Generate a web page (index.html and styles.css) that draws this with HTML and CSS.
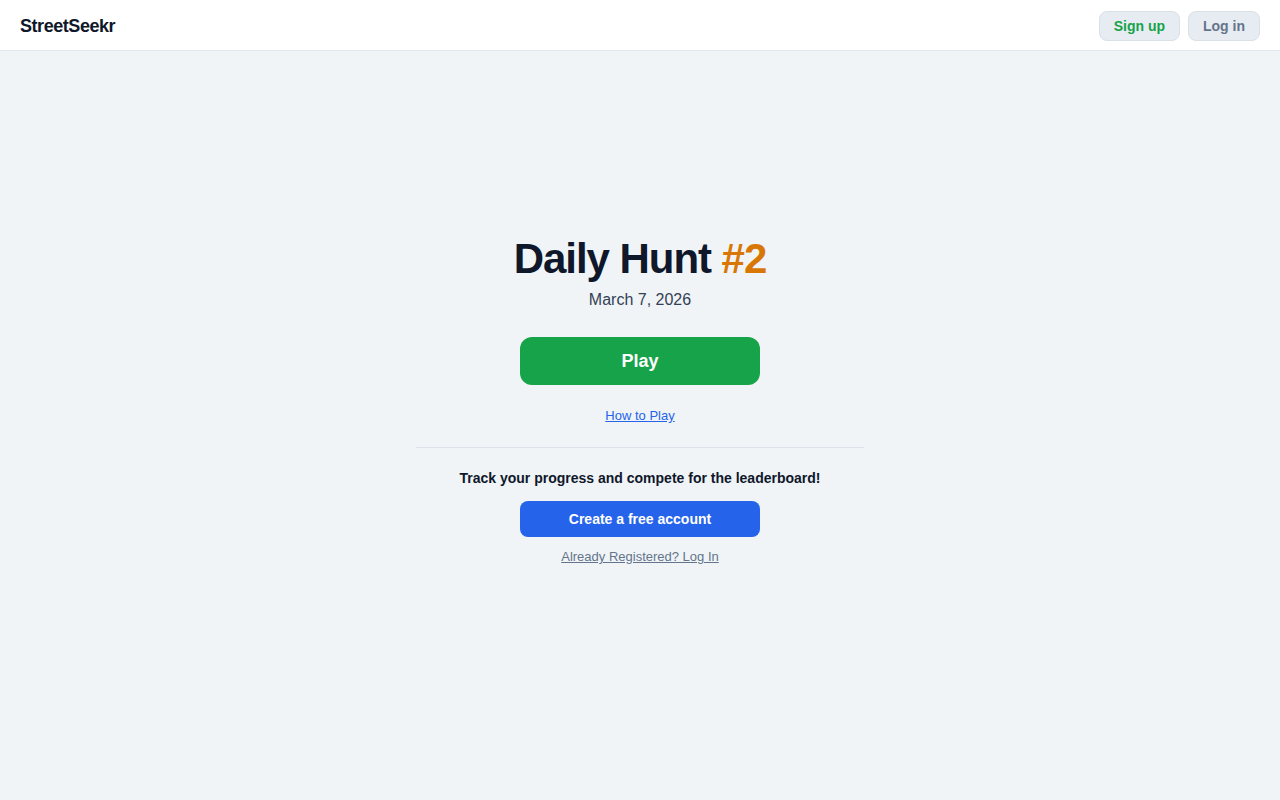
FILE: index.html
```html
<!DOCTYPE html>
<html lang="en">
<head>
<meta charset="utf-8">
<title>StreetSeekr</title>
<link rel="stylesheet" href="styles.css">
</head>
<body>
<header class="topbar">
  <a class="logo" href="#">StreetSeekr</a>
  <nav class="auth">
    <a class="btn-sm signup" href="#">Sign up</a>
    <a class="btn-sm login" href="#">Log in</a>
  </nav>
</header>
<main class="main">
  <section class="hero">
    <h1 class="title">Daily Hunt <span class="num">#2</span></h1>
    <p class="date">March 7, 2026</p>
    <a class="play" href="#">Play</a>
    <a class="howto" href="#">How to Play</a>
    <hr class="divider">
    <p class="track">Track your progress and compete for the leaderboard!</p>
    <a class="create" href="#">Create a free account</a>
    <a class="already" href="#">Already Registered? Log In</a>
  </section>
</main>
</body>
</html>
```
FILE: styles.css
```css
* { box-sizing: border-box; }
html, body { margin: 0; padding: 0; }
body {
  font-family: "Liberation Sans", Arial, sans-serif;
  background: #f0f4f7;
  color: #0f172a;
  min-height: 800px;
}
.topbar {
  height: 51px;
  background: #ffffff;
  border-bottom: 1px solid #e2e8f0;
  display: flex;
  align-items: center;
  justify-content: space-between;
  padding: 2px 20px 0;
}
.logo {
  font-size: 18px;
  font-weight: 700;
  letter-spacing: -0.025em;
  color: #0f172a;
  text-decoration: none;
}
.auth { display: flex; gap: 8px; }
.btn-sm {
  display: inline-block;
  font-size: 14px;
  font-weight: 700;
  line-height: 20px;
  padding: 4px 14px;
  border: 1px solid #d9e0e8;
  border-radius: 8px;
  background: #e7ecf2;
  text-decoration: none;
}
.signup { color: #16a34a; }
.login { color: #64748b; }
.main {
  display: flex;
  justify-content: center;
  padding-top: 184px;
}
.hero {
  width: 448px;
  display: flex;
  flex-direction: column;
  align-items: center;
  text-align: center;
}
.title {
  margin: 0;
  font-size: 42px;
  line-height: 48px;
  font-weight: 700;
  letter-spacing: -0.025em;
  color: #0f172a;
}
.num { color: #d97706; }
.date {
  margin: 5px 0 0;
  font-size: 16px;
  line-height: 24px;
  color: #334155;
}
.play {
  margin-top: 25px;
  width: 240px;
  height: 48px;
  border-radius: 12px;
  background: #16a34a;
  color: #ffffff;
  font-size: 18px;
  font-weight: 700;
  display: flex;
  align-items: center;
  justify-content: center;
  text-decoration: none;
}
.howto {
  margin-top: 22px;
  font-size: 13px;
  line-height: 18px;
  color: #2563eb;
  text-decoration: underline;
}
.divider {
  width: 100%;
  border: 0;
  border-top: 1px solid #dde3ea;
  margin: 22px 0 0;
}
.track {
  margin: 20px 0 0;
  font-size: 14px;
  line-height: 20px;
  font-weight: 700;
  color: #0f172a;
}
.create {
  margin-top: 13px;
  width: 240px;
  height: 36px;
  border-radius: 8px;
  background: #2563eb;
  color: #ffffff;
  font-size: 14px;
  font-weight: 700;
  display: flex;
  align-items: center;
  justify-content: center;
  text-decoration: none;
}
.already {
  margin-top: 11px;
  font-size: 13px;
  line-height: 18px;
  color: #64748b;
  text-decoration: underline;
}
```
